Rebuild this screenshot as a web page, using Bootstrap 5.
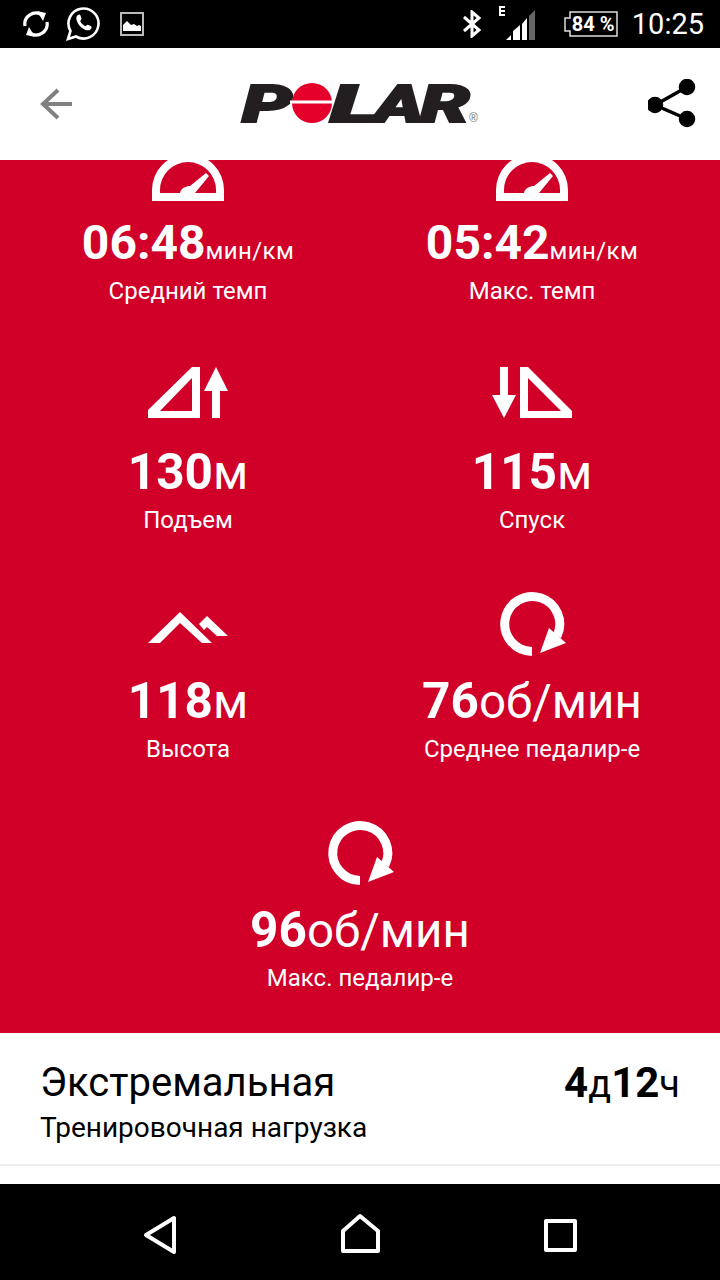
<!DOCTYPE html>
<html lang="ru">
<head>
    <meta charset="UTF-8">
    <meta name="viewport" content="width=device-width, initial-scale=1.0">
    <title>Polar</title>
    <link href="https://cdn.jsdelivr.net/npm/bootstrap@5.3.0/dist/css/bootstrap.min.css" rel="stylesheet">
    <style>
        body { width: 720px; height: 1280px; overflow: hidden; font-family: Roboto, "Liberation Sans", sans-serif; background: #fff; }
        .status-bar { height: 48px; background: #000; color: #fff; padding: 0 16px 0 22px; }
        .status-time { font-size: 29px; line-height: 1; }
        .status-gallery { margin-left: 19px; }
        .battery-box { width: 54px; height: 26px; margin: 0 14px 0 28px; }
        .battery-text { font-size: 20px; font-weight: 700; line-height: 26px; padding-left: 8px; white-space: nowrap; }
        .top-nav { height: 112px; padding: 0 22px 0 40px; }
        .red-panel { height: 873px; background: #d00029; color: #fff; overflow: hidden; }
        .red-scroll { margin-top: -37px; }
        .stat-block { height: 229px; }
        .stat-icon { display: block; width: 80px; height: 80px; margin: 0 auto; }
        .stat-value { font-size: 49.500px; font-weight: 700; line-height: 56px; margin-top: 12px; white-space: nowrap; }
        .stat-value-pace { font-size: 48px; }
        .unit-big { font-size: 47.500px; font-weight: 400; line-height: 1; }
        .unit-small { font-size: 24px; font-weight: 400; letter-spacing: .4px; line-height: 1; }
        .stat-label { font-size: 24px; line-height: 28px; margin-top: 6px; white-space: nowrap; }
        .load-row { height: 133px; padding: 27px 40px 0; color: #000; border-bottom: 2px solid #eee; }
        .load-title { font-size: 40px; line-height: 46px; }
        .load-sub { font-size: 28px; line-height: 32px; margin-top: 6px; }
        .load-time { font-size: 42px; font-weight: 700; line-height: 46px; }
        .load-time span { font-weight: 400; font-size: 38px; }
        .load-gap { height: 18px; }
        .bottom-nav { height: 96px; background: #000; }
        .logo-text { font-family: Roboto, sans-serif; font-weight: 900; font-style: italic; font-size: 52px; fill: #231f20; stroke: #231f20; stroke-width: 2px; }
        .logo-reg { font-family: "Liberation Sans", sans-serif; font-size: 12px; fill: #777; }
    </style>
</head>
<body class="d-flex flex-column">
    <!-- status bar -->
    <div class="status-bar d-flex align-items-center flex-shrink-0">
        <svg width="28" height="28" viewBox="0 0 28 28" fill="none" stroke="#fff" stroke-width="3.2">
            <path d="M3 16A11 11 0 0 1 20 5"/><path d="M25 12A11 11 0 0 1 8 23"/>
            <path d="M15 1l9 2-3 8z" fill="#fff" stroke="none"/><path d="M13 27l-9-2 3-8z" fill="#fff" stroke="none"/>
        </svg>
        <svg class="ms-3" width="34" height="36" viewBox="0 0 34 36" fill="none">
            <path d="M2 33l2.5-8A15 15 0 1 1 10 30.500z" stroke="#fff" stroke-width="2.600"/>
            <path d="M11 10c1-1.500 3-2 3.500-.5l1 3c.2.800-1.500 2-1.200 2.800 1 2.200 2.500 3.700 4.800 4.700.8.300 1.800-1.600 2.700-1.300l3 1.300c1.300.6.800 2.500-.3 3.500-5 4-17-7-13.500-14z" fill="#fff"/>
        </svg>
        <svg class="status-gallery" width="26" height="26" viewBox="0 0 26 26">
            <rect x="2" y="2" width="22" height="22" fill="none" stroke="#bbb" stroke-width="2"/>
            <path d="M4 20v-6l4-4 4 4 3-1 3 2 2-1 2 1v5z" fill="#fff"/>
        </svg>
        <div class="ms-auto d-flex align-items-center">
            <svg width="20" height="28" viewBox="0 0 20 28" fill="none" stroke="#fff" stroke-width="3">
                <path d="M2 7l15 13-7 6V2l7 6L2 21"/>
            </svg>
            <svg class="ms-3" width="38" height="36" viewBox="0 0 38 36">
                <path d="M1 0h6v2h-4v2h4v2h-4v2h4v2H1z" fill="#fff"/>
                <path d="M8 34L13 29V34zM15 34V25L22 19V34zM24 34V18L29 12V34z" fill="#fff"/>
                <path d="M31 34V10L37 4V34z" fill="#666"/>
            </svg>
            <div class="battery-box position-relative">
                <svg class="position-absolute top-0 start-0" width="54" height="26" viewBox="0 0 54 26" fill="none" stroke="#ddd" stroke-width="1.500">
                    <path d="M6 1h47v24H6v-5H1V7h5z"/>
                </svg>
                <div class="battery-text position-relative">84 %</div>
            </div>
            <span class="status-time">10:25</span>
        </div>
    </div>

    <!-- top nav -->
    <nav class="top-nav d-flex align-items-center justify-content-between flex-shrink-0">
        <svg width="32" height="32" viewBox="0 0 32 32" fill="none" stroke="#808080" stroke-width="4">
            <path d="M32 16H4M18 2L3 16l15 14"/>
        </svg>
        <svg width="240" height="64" viewBox="0 0 240 64" role="img" aria-label="Polar">
            <text class="logo-text" x="2" y="50" textLength="50" lengthAdjust="spacingAndGlyphs">P</text>
            <circle cx="72" cy="31" r="20" fill="#e4002b"/>
            <rect x="50" y="28.500" width="44" height="3" fill="#fff"/>
            <text class="logo-text" x="90" y="50" textLength="50" lengthAdjust="spacingAndGlyphs">L</text>
            <text class="logo-text" x="134" y="50" textLength="50" lengthAdjust="spacingAndGlyphs">A</text>
            <text class="logo-text" x="180" y="50" textLength="50" lengthAdjust="spacingAndGlyphs">R</text>
            <text class="logo-reg" x="229" y="50">®</text>
        </svg>
        <svg width="50" height="50" viewBox="0 0 50 50" fill="#000" stroke="#000" stroke-width="3.500">
            <path d="M39 8L7 26l32 14" fill="none"/>
            <circle cx="39" cy="8" r="6.500"/><circle cx="7" cy="26" r="6.500"/><circle cx="39" cy="40" r="6.500"/>
        </svg>
    </nav>

    <!-- stats -->
    <div class="red-panel flex-shrink-0">
        <div class="red-scroll">
            <div class="row g-0 px-3">
                <div class="col-6 stat-block text-center">
                    <svg class="stat-icon" viewBox="0 0 80 80" fill="#fff">
                        <path fill-rule="evenodd" d="M4 78V67A36 36 0 0 1 76 67V78ZM12 70H68V67A28 28 0 0 0 12 67Z"/>
                        <path d="M32 70C33 65 38 63 42 63L58 50 61 53 47 70Z"/>
                    </svg>
                    <div class="stat-value stat-value-pace">06:48<span class="unit-small">мин/км</span></div>
                    <div class="stat-label">Средний темп</div>
                </div>
                <div class="col-6 stat-block text-center">
                    <svg class="stat-icon" viewBox="0 0 80 80" fill="#fff">
                        <path fill-rule="evenodd" d="M4 78V67A36 36 0 0 1 76 67V78ZM12 70H68V67A28 28 0 0 0 12 67Z"/>
                        <path d="M32 70C33 65 38 63 42 63L58 50 61 53 47 70Z"/>
                    </svg>
                    <div class="stat-value stat-value-pace">05:42<span class="unit-small">мин/км</span></div>
                    <div class="stat-label">Макс. темп</div>
                </div>
                <div class="col-6 stat-block text-center">
                    <svg class="stat-icon" viewBox="0 0 80 80" fill="#fff">
                        <path fill-rule="evenodd" d="M0 58L44 15H52V66H0ZM12 59H44V26Z"/>
                        <path d="M68 15L80 39H72V66H64V39H56Z"/>
                    </svg>
                    <div class="stat-value">130<span class="unit-big">м</span></div>
                    <div class="stat-label">Подъем</div>
                </div>
                <div class="col-6 stat-block text-center">
                    <svg class="stat-icon" viewBox="0 0 80 80" fill="#fff">
                        <path d="M8 15H16V43H24L12 66 0 43H8Z"/>
                        <path fill-rule="evenodd" d="M28 15H36L80 59V66H28ZM36 26V59H69Z"/>
                    </svg>
                    <div class="stat-value">115<span class="unit-big">м</span></div>
                    <div class="stat-label">Спуск</div>
                </div>
                <div class="col-6 stat-block text-center">
                    <svg class="stat-icon" viewBox="0 0 80 80" fill="#fff">
                        <path d="M32 31L64 62H54L32 42 12 62H0Z"/>
                        <path d="M59 35L80 55H69L59 46 56 49 51 43Z"/>
                    </svg>
                    <div class="stat-value">118<span class="unit-big">м</span></div>
                    <div class="stat-label">Высота</div>
                </div>
                <div class="col-6 stat-block text-center">
                    <svg class="stat-icon" viewBox="0 0 80 80" fill="#fff">
                        <path d="M40 70.500A27.500 27.500 0 1 1 65 55" fill="none" stroke="#fff" stroke-width="9"/>
                        <path d="M57 47L74 62 48 72Z"/>
                    </svg>
                    <div class="stat-value">76<span class="unit-big">об/мин</span></div>
                    <div class="stat-label">Среднее педалир-е</div>
                </div>
                <div class="col-12 stat-block text-center">
                    <svg class="stat-icon" viewBox="0 0 80 80" fill="#fff">
                        <path d="M40 70.500A27.500 27.500 0 1 1 65 55" fill="none" stroke="#fff" stroke-width="9"/>
                        <path d="M57 47L74 62 48 72Z"/>
                    </svg>
                    <div class="stat-value">96<span class="unit-big">об/мин</span></div>
                    <div class="stat-label">Макс. педалир-е</div>
                </div>
            </div>
        </div>
    </div>

    <!-- training load -->
    <div class="load-row d-flex justify-content-between flex-shrink-0">
        <div>
            <div class="load-title">Экстремальная</div>
            <div class="load-sub">Тренировочная нагрузка</div>
        </div>
        <div class="load-time">4<span>д</span>12<span>ч</span></div>
    </div>
    <div class="load-gap flex-shrink-0"></div>

    <!-- android nav -->
    <div class="bottom-nav flex-shrink-0">
        <svg class="d-block" width="720" height="96" viewBox="0 0 720 96" fill="none" stroke="#fff" stroke-width="4" stroke-linejoin="round">
            <path d="M174 34V68L146 51Z"/>
            <path d="M343 67V47L360 32 378 47V67Z"/>
            <rect x="546" y="37" width="29" height="29"/>
        </svg>
    </div>
</body>
</html>
